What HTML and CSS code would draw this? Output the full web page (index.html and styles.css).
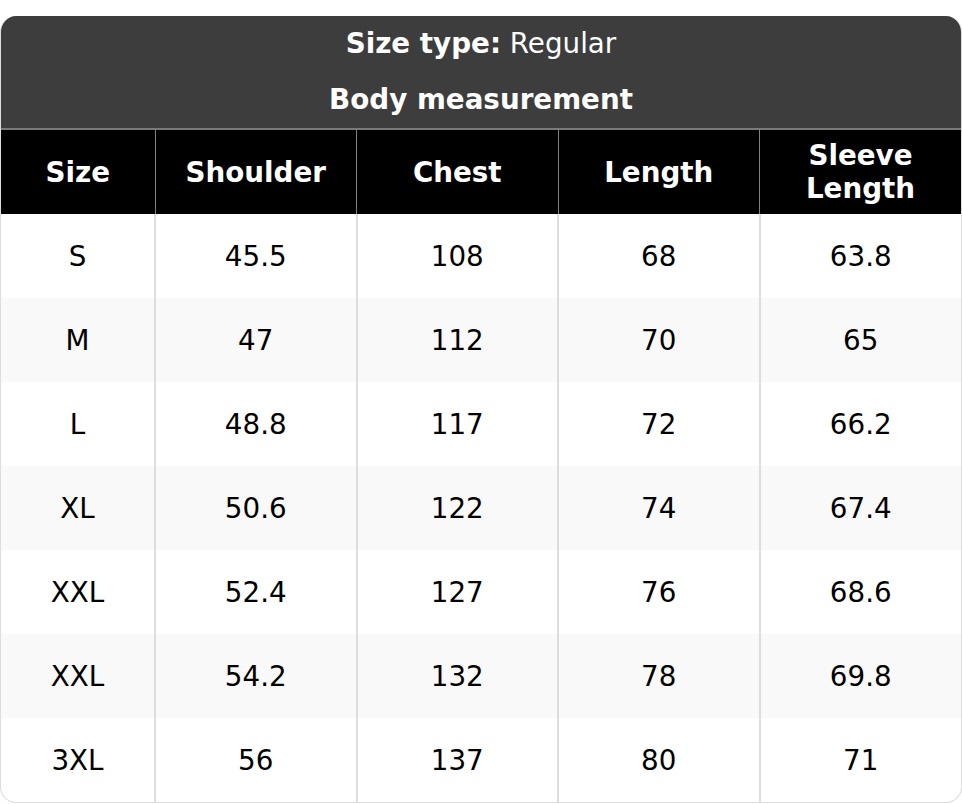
FILE: index.html
```html
<!DOCTYPE html>
<html lang="en">
<head>
<meta charset="utf-8">
<title>Size chart</title>
<link rel="stylesheet" href="styles.css">
</head>
<body>
<div class="chart">
  <div class="chart-head">
    <div class="chart-line"><b>Size type:</b> Regular</div>
    <div class="chart-line"><b>Body measurement</b></div>
  </div>
  <table class="size-table">
    <colgroup>
      <col class="c-size">
      <col class="c-val">
      <col class="c-val">
      <col class="c-val">
      <col class="c-val">
    </colgroup>
    <thead>
      <tr><th>Size</th><th>Shoulder</th><th>Chest</th><th>Length</th><th>Sleeve<br>Length</th></tr>
    </thead>
    <tbody>
      <tr><td>S</td><td>45.5</td><td>108</td><td>68</td><td>63.8</td></tr>
      <tr><td>M</td><td>47</td><td>112</td><td>70</td><td>65</td></tr>
      <tr><td>L</td><td>48.8</td><td>117</td><td>72</td><td>66.2</td></tr>
      <tr><td>XL</td><td>50.6</td><td>122</td><td>74</td><td>67.4</td></tr>
      <tr><td>XXL</td><td>52.4</td><td>127</td><td>76</td><td>68.6</td></tr>
      <tr><td>XXL</td><td>54.2</td><td>132</td><td>78</td><td>69.8</td></tr>
      <tr><td>3XL</td><td>56</td><td>137</td><td>80</td><td>71</td></tr>
    </tbody>
  </table>
</div>
</body>
</html>
```
FILE: styles.css
```css
html, body {
  margin: 0;
  padding: 0;
  background: #ffffff;
}
body {
  padding-top: 16px;
  font-family: "DejaVu Sans", "Liberation Sans", sans-serif;
  font-size: 27.75px;
  color: #000;
}
.chart {
  width: 962px;
  box-sizing: border-box;
  border: 1px solid #dcdcdc;
  border-top: none;
  border-radius: 16px;
  overflow: hidden;
}
.chart-head {
  background: #3d3d3d;
  color: #fff;
  text-align: center;
  border-bottom: 2px solid #7a7a7a;
}
.chart-line {
  height: 56px;
  line-height: 56px;
}
.chart-head b { font-weight: bold; }
.size-table {
  width: 100%;
  border-collapse: collapse;
  table-layout: fixed;
}
.c-size { width: 154px; }
.size-table th,
.size-table td {
  text-align: center;
  vertical-align: middle;
  line-height: 33px;
  padding: 0;
  height: 84px;
  box-sizing: border-box;
}
.size-table th {
  background: #000;
  color: #fff;
  font-weight: bold;
  border-left: 1px solid #808080;
}
.size-table td {
  border-left: 2px solid #dddddd;
}
.size-table th:first-child,
.size-table td:first-child {
  border-left: none;
}
.size-table tbody tr:nth-child(even) td {
  background: #f9f9f9;
}
```
